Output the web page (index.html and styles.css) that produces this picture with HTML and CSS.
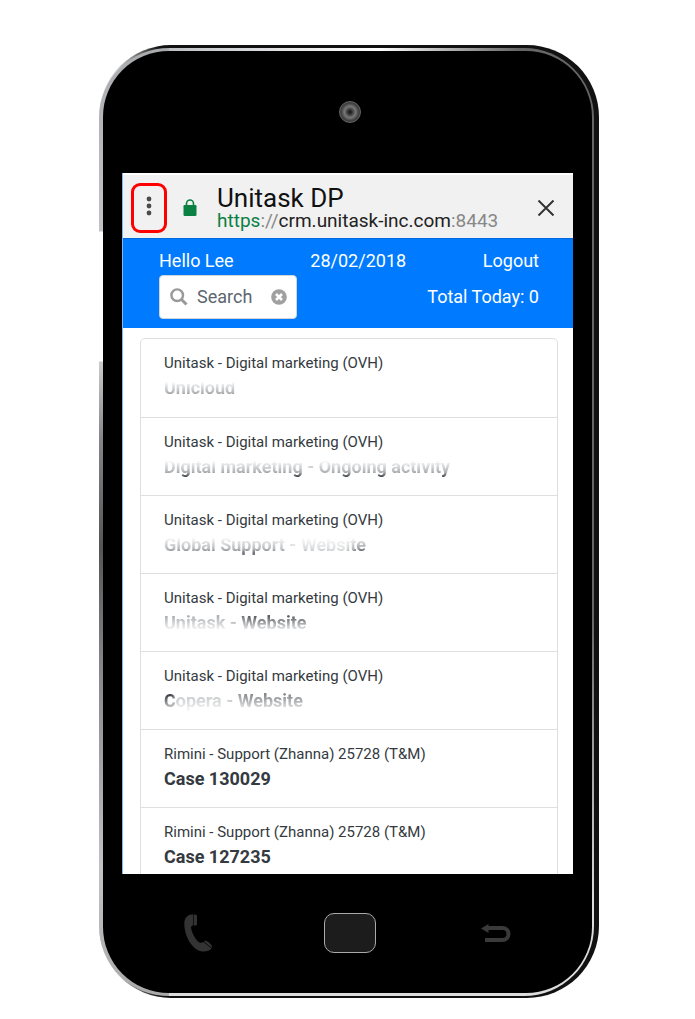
FILE: index.html
```
<!DOCTYPE html>
<html lang="en">

<head>
    <meta charset="UTF-8">
    <meta name="viewport" content="width=device-width, initial-scale=1.0">
    <title>Unitask DP</title>
    <link rel="stylesheet" href="styles.css">
</head>

<body>
    <div class="phone">
        <div class="rim">
            <div class="face">
                <div class="speaker">
                    <span class="camera"></span>
                </div>

                <div class="screen">
                    <header class="browser-bar">
                        <button type="button" class="menu-btn" aria-label="Menu">
                            <svg width="8" height="24" viewBox="0 0 8 24" fill="#4a4a4a">
                                <circle cx="4" cy="5" r="2.4"/>
                                <circle cx="4" cy="12" r="2.4"/>
                                <circle cx="4" cy="19" r="2.4"/>
                            </svg>
                        </button>
                        <svg class="lock" width="14" height="18" viewBox="0 0 14 18">
                            <path d="M3.500 7V4.500a3.500 3.500 0 0 1 7 0V7" fill="none" stroke="#0b8043" stroke-width="1.6"/>
                            <rect x="0.5" y="6" width="13" height="11" rx="1.2" fill="#0b8043"/>
                        </svg>
                        <div class="page-info">
                            <div class="page-title">Unitask DP</div>
                            <div class="page-url"><span class="secure">https</span><span class="muted">://</span>crm.unitask-inc.com<span class="muted">:8443</span></div>
                        </div>
                        <button type="button" class="close-btn" aria-label="Close">
                            <svg width="18" height="16" viewBox="0 0 18 16">
                                <path d="M1.500 0.500l15 15M16.500 0.500l-15 15" stroke="#333" stroke-width="2" fill="none"/>
                            </svg>
                        </button>
                    </header>

                    <div class="topbar">
                        <div class="topbar-row">
                            <span>Hello Lee</span>
                            <span>28/02/2018</span>
                            <a href="#">Logout</a>
                        </div>
                        <div class="topbar-row">
                            <div class="search">
                                <svg width="18" height="18" viewBox="0 0 18 18" fill="none" stroke="#999">
                                    <circle cx="7.2" cy="7.2" r="5.8" stroke-width="2.4"/>
                                    <path d="M11.5 11.5l5 5" stroke-width="3"/>
                                </svg>
                                <input type="text" placeholder="Search" aria-label="Search">
                                <button type="button" class="clear-btn" aria-label="Clear">
                                    <svg width="16" height="16" viewBox="0 0 16 16">
                                        <circle cx="8" cy="8" r="7.8" fill="#a0a0a0"/>
                                        <path d="M5 5l6 6M11 5l-6 6" stroke="#fff" stroke-width="2.6"/>
                                    </svg>
                                </button>
                            </div>
                            <span>Total Today: 0</span>
                        </div>
                    </div>

                    <ul class="task-list">
                        <li class="task">
                            <p class="project">Unitask - Digital marketing (OVH)</p>
                            <p class="title fade-top">Unicloud</p>
                        </li>
                        <li class="task">
                            <p class="project">Unitask - Digital marketing (OVH)</p>
                            <p class="title fade-top">Digital marketing - Ongoing activity</p>
                        </li>
                        <li class="task">
                            <p class="project">Unitask - Digital marketing (OVH)</p>
                            <p class="title fade-middle">Global Support - Website</p>
                        </li>
                        <li class="task">
                            <p class="project">Unitask - Digital marketing (OVH)</p>
                            <p class="title fade-bottom">Unitask - Website</p>
                        </li>
                        <li class="task">
                            <p class="project">Unitask - Digital marketing (OVH)</p>
                            <p class="title fade-bottom fade-first">Copera - Website</p>
                        </li>
                        <li class="task">
                            <p class="project">Rimini - Support (Zhanna) 25728 (T&amp;M)</p>
                            <p class="title">Case 130029</p>
                        </li>
                        <li class="task">
                            <p class="project">Rimini - Support (Zhanna) 25728 (T&amp;M)</p>
                            <p class="title">Case 127235</p>
                        </li>
                    </ul>
                </div>

                <div class="phone-keys">
                    <button type="button" class="key" aria-label="Call">
                        <svg width="34" height="38" viewBox="0 0 34 38" fill="#333">
                            <path d="M8 0.500C3 1 0.300 4 0.300 10C0.500 22 8 36 18 37.500C22 38 26 36.500 27.500 34.500L19.500 28C18 29 16 29 14.500 28C11 25 7.500 18 7 13.500C7.500 12 8 11.500 9 11.500V0.500Z"/>
                            <path d="M9.600 0.500h1.900q1.500 0 1.500 1.500v8q0 1.500-1.500 1.500H9.600ZM20 27.500l1.500-1q5.500 2.500 6.500 6l-.3 1.500Z"/>
                        </svg>
                    </button>
                    <button type="button" class="home-key" aria-label="Home"></button>
                    <button type="button" class="key" aria-label="Back">
                        <svg width="30" height="18" viewBox="0 0 30 18">
                            <path d="M6 4h15.500a6 6 0 0 1 0 12H4" fill="none" stroke="#3a3a3a" stroke-width="4"/>
                            <path d="M0 4.500L7.500 0v9Z" fill="#3a3a3a"/>
                        </svg>
                    </button>
                </div>
            </div>
        </div>
    </div>
</body>

</html>
```
FILE: styles.css
```
* {
    box-sizing: border-box;
}

body {
    margin: 0;
    padding: 45px 96px 21px 99px;
    background-color: #fff;
    font-family: Roboto, "Liberation Sans", sans-serif;
    color: #343a40;
}

p {
    margin: 0;
}

button {
    padding: 0;
    border: none;
    background: none;
    cursor: pointer;
}

svg {
    display: block;
}

/* phone body */
.phone {
    padding: 3px 5px 2px 0;
    border-radius: 72px;
    background:
        linear-gradient(#fff, #fff) 0 186px / 4px 130px no-repeat,
        linear-gradient(to right, #e4e4e4 0, #c8c8c8 20px, #111 60px, #111 100%);
}

/* left edge has a gap for the volume buttons */
.rim {
    padding: 3px 2px 3px 4px;
    border-radius: 70px;
    background:
        linear-gradient(to bottom, #a9abae 0, #c0c2c5 183px, #fff 184px, #fff 313px, #ccc 314px, #85868a 390px, #555 500px, #85868a 620px, #c0c2c5 820px, #aaa 100%) 0 0 / 70px 100% no-repeat,
        linear-gradient(to right, #a9abae 0, #fff 280px, transparent 420px) 0 0 / 100% 3px no-repeat,
        linear-gradient(to bottom, #666 0, #666 60%, #ddd 90%, #ddd 100%);
}

.face {
    padding: 0 19px;
    border-radius: 66px;
    background-color: #000;
}

.speaker {
    display: flex;
    justify-content: center;
    height: 122px;
    padding: 50px 0 0 4px;
}

.camera {
    width: 22px;
    height: 22px;
    border: 1px solid #666;
    border-radius: 50%;
    background: radial-gradient(circle, #111 0, #333 15%, #777 40%, #444 60%, #222 100%);
}

.screen {
    height: 701px;
    border-left: 1px solid #7fb8f0;
    overflow: hidden;
    background-color: #fff;
}

/* browser bar */
.browser-bar {
    display: flex;
    align-items: center;
    height: 65px;
    padding: 2px 18px 0 8px;
    border-top: 2px solid #fff;
    background-color: #f1f1f1;
}

.menu-btn {
    display: flex;
    justify-content: center;
    width: 36px;
    height: 50px;
    padding-top: 8px;
    border: 3px solid #f00;
    border-radius: 9px;
}

.lock {
    margin: 0 20px 0 16px;
}

.page-info {
    flex: 1;
}

.page-title {
    font-size: 26px;
    line-height: 26px;
    color: #111;
}

.page-url {
    font-size: 19px;
    line-height: 20px;
    color: #222;
}

.secure {
    color: #0b8043;
}

.muted {
    color: #888;
}

/* blue bar */
.topbar {
    height: 90px;
    padding: 8px 34px 0 36px;
    border-top: 1px solid #0069e0;
    background-color: #007bff;
    color: #fff;
    font-size: 18px;
    line-height: 28px;
}

.topbar-row {
    display: flex;
    justify-content: space-between;
}

.topbar-row a {
    color: #fff;
    text-decoration: none;
}

.topbar-row + .topbar-row {
    line-height: 44px;
}

.search {
    display: flex;
    align-items: center;
    width: 138px;
    height: 44px;
    padding: 0 9px 0 10px;
    border: 1px solid #ced4da;
    border-radius: 4px;
    background-color: #fff;
    line-height: 28px;
}

.search input {
    flex: 1;
    min-width: 0;
    height: 28px;
    margin-left: 9px;
    padding: 0;
    border: none;
    outline: none;
    font: inherit;
    color: #495057;
}

.search input::placeholder {
    color: #5c666f;
}

/* task list */
.task-list {
    margin: 10px 15px 0 17px;
    padding: 0;
    border: 1px solid #dfdfdf;
    border-radius: 5px;
    list-style: none;
}

.task {
    height: 78px;
    padding: 12px 23px;
}

.task + .task {
    border-top: 1px solid #dfdfdf;
}

.project {
    font-size: 15px;
    line-height: 24px;
}

.title {
    width: fit-content;
    font-size: 18px;
    font-weight: bold;
    line-height: 26px;
}

/* partly hidden titles */
.fade-top {
    mask-image: linear-gradient(to bottom, transparent 25%, rgba(0, 0, 0, 0.4) 70%, #000 90%);
}

.fade-middle {
    mask-image:
        linear-gradient(to bottom, transparent 20%, rgba(0, 0, 0, 0.5) 65%, #000 80%),
        linear-gradient(to right, rgba(0, 0, 0, 0.7) 55%, rgba(0, 0, 0, 0.4) 65%, rgba(0, 0, 0, 0.3) 90%, #000 96%);
    mask-composite: intersect;
}

.fade-bottom {
    mask-image:
        linear-gradient(to bottom, #000 25%, rgba(0, 0, 0, 0.3) 65%, transparent 85%),
        linear-gradient(to right, rgba(0, 0, 0, 0.4) 45%, rgba(0, 0, 0, 0.8) 60%);
    mask-composite: intersect;
}

.fade-first {
    mask-image:
        linear-gradient(to bottom, #000 25%, rgba(0, 0, 0, 0.3) 75%, transparent 95%),
        linear-gradient(to right, #000 5%, rgba(0, 0, 0, 0.3) 10%, rgba(0, 0, 0, 0.3) 45%, rgba(0, 0, 0, 0.6) 60%);
}

/* hardware keys */
.phone-keys {
    display: flex;
    justify-content: space-between;
    align-items: center;
    height: 119px;
    padding: 0 62px 2px;
}

.home-key {
    width: 52px;
    height: 40px;
    border: 1px solid #aaa;
    border-radius: 10px;
    background-color: #1c1c1c;
}
```
